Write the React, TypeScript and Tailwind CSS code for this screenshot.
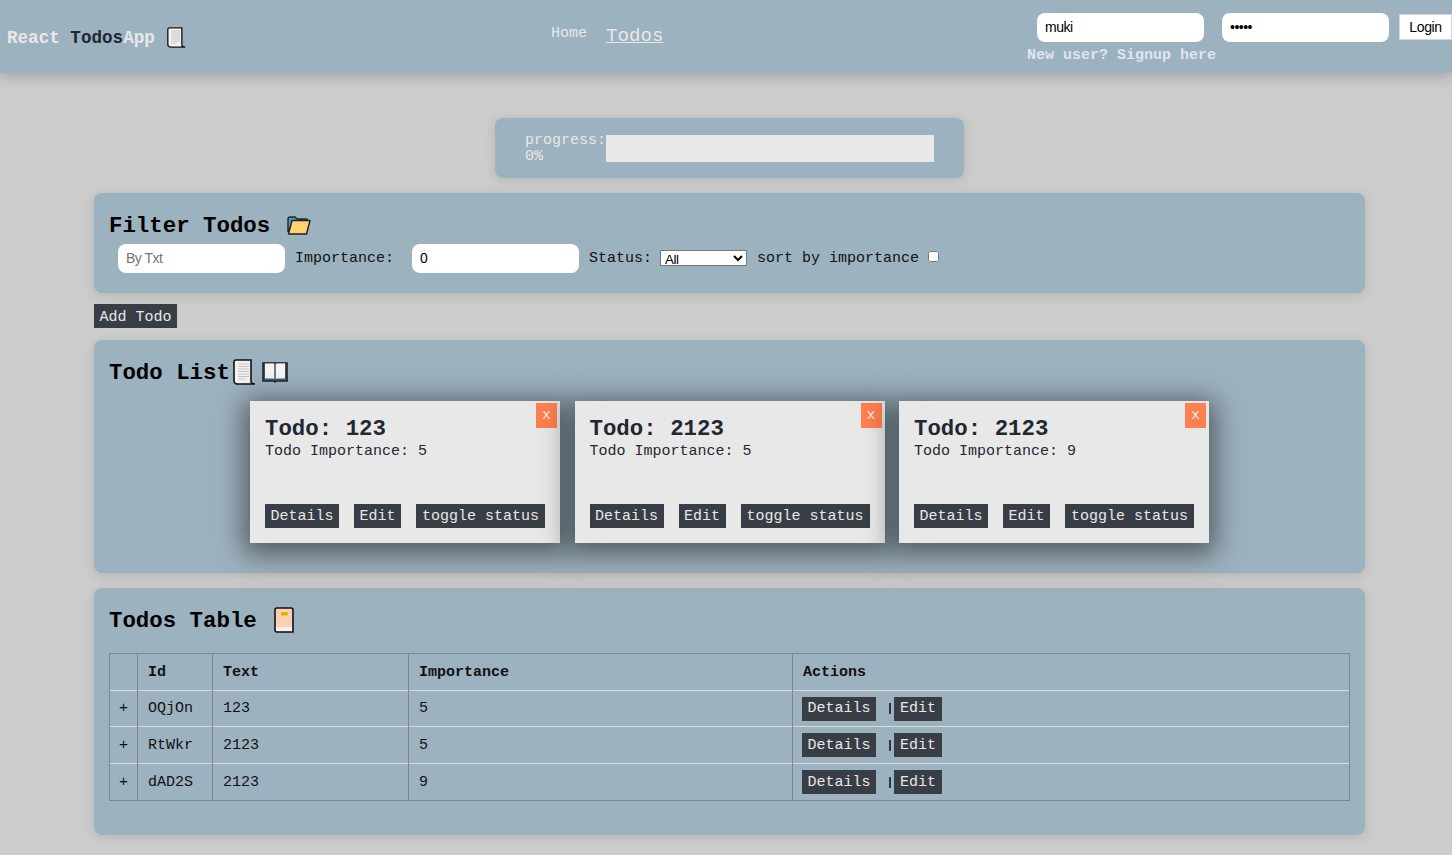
import type { ReactNode } from 'react';

const todos = [
  { id: 'OQjOn', txt: '123', importance: 5 },
  { id: 'RtWkr', txt: '2123', importance: 5 },
  { id: 'dAD2S', txt: '2123', importance: 9 },
];

const btn = 'inline-flex items-center justify-center h-6 bg-[#393e46] text-[#e8e8e8] text-[15px] leading-none';
const field =
  "w-[167px] h-[29px] rounded-lg bg-white px-[8px] pb-[2px] text-[14px] text-black tracking-[-0.5px] font-['Liberation_Sans',Arial,sans-serif] placeholder:text-[#757575]";
const panel = 'rounded-lg bg-[#9db2bf] shadow-[0_2px_12px_rgba(0,0,0,0.12)]';
const heading = 'text-[22.4px] leading-none font-bold text-black pt-[2px]';

const ScrollIcon = ({ className }: { className: string }) => (
  <svg viewBox="0 0 23 26" preserveAspectRatio="none" className={className}>
    <path d="M3 1h15v21c0 1.500 1.500 3 4 3H5c-2 0-4-1-4-3V3c0-1 1-2 2-2z" fill="#f4f4f4" stroke="#111" strokeWidth="1.600" />
    <path d="M5 5h11M5 7.500h11M5 10h11M5 12.500h11M5 15h11M5 17.500h11M5 20h7" stroke="#c4c4c4" strokeWidth="1.200" />
  </svg>
);

const FolderIcon = () => (
  <svg viewBox="0 0 24 19" className="w-6 h-[19px] ml-[17px]">
    <path d="M1 16V3c0-1 .6-2 2-2h5l2 2h9c1 0 1.500.6 1.500 1.500V6H6z" fill="#4f97c4" stroke="#222" strokeWidth="1.400" />
    <path d="M1.500 18L5 4.500h18L19.500 18z" fill="#ffd36e" stroke="#222" strokeWidth="1.400" strokeLinejoin="round" />
  </svg>
);

const OpenBookIcon = () => (
  <svg viewBox="0 0 26 22" className="w-[26px] h-[22px] ml-[6px]">
    <path d="M1 2h24v18H14l-1 1-1-1H1z" fill="#2f7fb0" stroke="#222" strokeWidth="1.600" />
    <path d="M2.500 2h8c1 0 2 .5 2.500 1.500V19c-.5-.6-1.500-1-2.500-1h-8zM23.500 2h-8c-1 0-2 .5-2.500 1.500V19c.5-.6 1.500-1 2.500-1h8z" fill="#f4f4f4" stroke="#333" strokeWidth=".8" />
  </svg>
);

const NotebookIcon = () => (
  <svg viewBox="0 0 20 26" className="w-5 h-[26px] ml-[17px]">
    <path d="M3 1h14c1 0 2 1 2 2v22H3c-1 0-2-1-2-2V3c0-1 1-2 2-2z" fill="#f9d0b4" stroke="#111" strokeWidth="1.600" />
    <rect x="2" y="20" width="16" height="4" fill="#f6f1ec" />
    <rect x="7" y="5" width="7" height="3.500" rx="1" fill="#e0b400" />
  </svg>
);

const Th = ({ children, className = '' }: { children?: ReactNode; className?: string }) => (
  <th className={`border-x border-[#848484] px-[10px] pt-[2px] text-left font-bold text-[15px] text-[#111] ${className}`}>{children}</th>
);

const Td = ({ children, className = '' }: { children?: ReactNode; className?: string }) => (
  <td className={`border-x border-[#848484] px-[10px] pt-[2px] text-[15px] text-[#111] ${className}`}>{children}</td>
);

const TodoCard = ({ txt, importance }: { txt: string; importance: number }) => (
  <div className="relative w-[310px] h-[142px] flex flex-col bg-[#e8e8e8] p-[15px] text-[#222831] shadow-[0_5px_26px_6px_rgba(0,0,0,0.5)]">
    <button className="absolute top-[2px] right-[3px] w-[21px] h-[25px] pt-[1px] bg-[#ff7f50] text-[15px] text-[#eee]">x</button>
    <h3 className="text-[22.4px] leading-6 font-bold mt-[1px]">Todo: {txt}</h3>
    <p className="text-[15px] leading-[18px] mt-[2px]">Todo Importance: {importance}</p>
    <div className="flex gap-[15px] mt-auto">
      <button className={`${btn} w-[74px]`}>Details</button>
      <button className={`${btn} w-[47px]`}>Edit</button>
      <button className={`${btn} w-[129px]`}>toggle status</button>
    </div>
  </div>
);

export default function App() {
  return (
    <div className="min-h-screen overflow-hidden bg-[#cccccc] font-['Liberation_Mono','Courier_New',monospace]">
      <header className="h-[73px] flex bg-[#9db2bf] shadow-[0_2px_14px_rgba(0,0,0,0.25)]">
        <div className="w-[551px] pl-[7px] pt-[27px] flex items-start">
          <span className="text-[17.6px] leading-[21px] font-bold text-[#e8e8e8] pt-[1px]">
            React <span className="text-[#222831]">Todos</span>App
          </span>
          <ScrollIcon className="w-[19px] h-[21px] ml-3" />
        </div>
        <nav className="flex items-start pt-[24px] text-[#e8e8e8]">
          <a className="text-[15px] leading-5">Home</a>
          <a className="ml-[19px] text-[19.2px] leading-6 underline">Todos</a>
        </nav>
        <div className="ml-auto w-[425px] pt-[13px]">
          <div className="flex items-start pl-[10px]">
            <input className={field} defaultValue="muki" />
            <input className={`${field} ml-[18px]`} type="password" defaultValue="muki1" />
            <button className="ml-[10px] mt-[1px] w-[53px] h-[26px] bg-white border border-[#d4d4d4] text-[14px] tracking-[-0.4px] text-black font-['Liberation_Sans',Arial,sans-serif]">
              Login
            </button>
          </div>
          <a className="block mt-[5px] text-[15px] leading-[17px] font-bold text-[#dde6ed]">New user? Signup here</a>
        </div>
      </header>

      <main className="w-[1271px] ml-[94px]">
        <section className={`${panel} w-[469px] h-[60px] ml-[401px] mt-[45px] pl-[30px] pt-[17px] flex text-[#e8e8e8] text-[15px] leading-4`}>
          <div className="w-[81px] -mt-[2px]">
            <div>progress:</div>
            <div>0%</div>
          </div>
          <div className="w-[328px] h-[27px] bg-[#e8e8e8]" />
        </section>

        <section className={`${panel} h-[100px] mt-[15px] px-[15px] pt-[21px]`}>
          <div className="flex items-center h-[22px]">
            <h2 className={heading}>Filter Todos</h2>
            <FolderIcon />
          </div>
          <div className="flex items-center mt-[8px] ml-[9px] text-[15px] text-[#111]">
            <input className={field} placeholder="By Txt" />
            <label className="ml-[10px] pt-[2px]">Importance:</label>
            <input className={`${field} ml-[18px]`} type="number" defaultValue={0} />
            <label className="ml-[10px] pt-[2px]">Status:</label>
            <select className="ml-2 w-[87px] h-4 -mt-[1px] pt-0 pb-[1px] bg-white border border-[#767676] text-[13.33px] leading-[13px] tracking-[-0.4px] text-black font-['Liberation_Sans',Arial,sans-serif]">
              <option>All</option>
            </select>
            <label className="ml-[10px] pt-[2px]">sort by importance</label>
            <input className="ml-[9px] w-[11px] h-[11px] -mt-[5px]" type="checkbox" />
          </div>
        </section>

        <div className="flex mt-[11px]">
          <button className={`${btn} w-[83px] pt-[2px]`}>Add Todo</button>
        </div>

        <section className={`${panel} h-[233px] mt-3 px-[15px] pt-[20px]`}>
          <div className="flex items-center h-6">
            <h2 className={heading}>Todo List</h2>
            <ScrollIcon className="w-[23px] h-[26px] ml-[3px]" />
            <OpenBookIcon />
          </div>
          <div className="flex justify-center gap-[14.5px] mt-[17px]">
            {todos.map((t) => (
              <TodoCard key={t.id} txt={t.txt} importance={t.importance} />
            ))}
          </div>
        </section>

        <section className={`${panel} h-[247px] mt-[15px] px-[15px] pt-[19px]`}>
          <div className="flex items-center h-[26px]">
            <h2 className={heading}>Todos Table</h2>
            <NotebookIcon />
          </div>
          <table className="w-[1241px] mt-5 table-fixed border-collapse border border-[#848484]">
            <thead>
              <tr className="h-[37px]">
                <Th className="w-7" />
                <Th className="w-[75px]">Id</Th>
                <Th className="w-[196px]">Text</Th>
                <Th className="w-96">Importance</Th>
                <Th>Actions</Th>
              </tr>
            </thead>
            <tbody>
              {todos.map((t) => (
                <tr key={t.id} className="h-[37px] first:h-9 border-t border-[#dcdcdc]">
                  <Td className="text-center !px-0">+</Td>
                  <Td>{t.id}</Td>
                  <Td>{t.txt}</Td>
                  <Td>{t.importance}</Td>
                  <Td className="!pt-0">
                    <div className="flex items-center -ml-[1px]">
                      <button className={`${btn} w-[74px]`}>Details</button>
                      <span className="ml-[13px] w-[2px] h-[11px] bg-[#27374d]" />
                      <button className={`${btn} w-12 ml-[3px]`}>Edit</button>
                    </div>
                  </Td>
                </tr>
              ))}
            </tbody>
          </table>
        </section>
      </main>
    </div>
  );
}
